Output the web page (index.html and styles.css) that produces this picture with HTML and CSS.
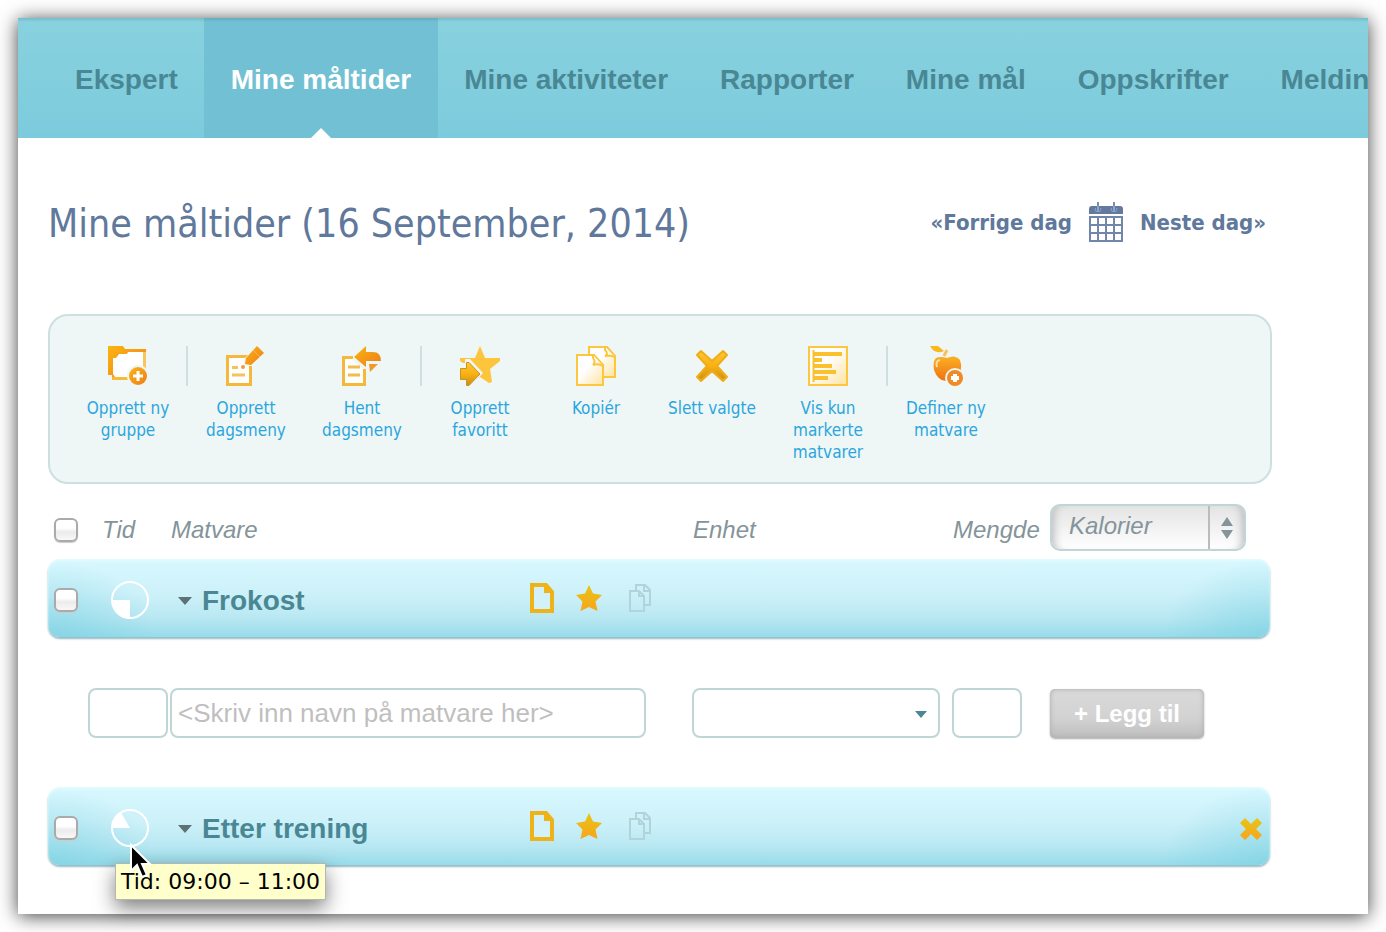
FILE: index.html
```html
<!DOCTYPE html>
<html lang="no">
<head>
<meta charset="utf-8">
<title>Mine måltider</title>
<link rel="stylesheet" href="styles.css">
</head>
<body>
<svg class="defs" width="0" height="0" aria-hidden="true">
  <defs>
    <linearGradient id="amber" x1="0" y1="0" x2="1" y2="1"><stop offset="0" stop-color="#fbb512"/><stop offset="1" stop-color="#ee7d1a"/></linearGradient>
    <linearGradient id="yellow" x1="0" y1="0" x2="0" y2="1"><stop offset="0" stop-color="#e8c414"/><stop offset="1" stop-color="#f7a51d"/></linearGradient>
    <linearGradient id="gold" x1="0" y1="0" x2="0" y2="1"><stop offset="0" stop-color="#ffc933"/><stop offset=".5" stop-color="#f9b012"/><stop offset="1" stop-color="#c98f18"/></linearGradient>
    <linearGradient id="paper" x1="0" y1="0" x2="1" y2="1"><stop offset=".4" stop-color="#fff"/><stop offset="1" stop-color="#ffe3a0"/></linearGradient>
    <linearGradient id="fruit" x1="0" y1="0" x2="0" y2="1"><stop offset="0" stop-color="#fcb022"/><stop offset="1" stop-color="#ec6f14"/></linearGradient>
    <symbol id="note" viewBox="0 0 24 30"><path d="M2 2H16L22 9V28H2Z" fill="#d3f1f8" stroke="#efb31a" stroke-width="4"/><path d="M14 2H17L23 8V10H14Z" fill="#efb31a"/></symbol>
    <symbol id="star" viewBox="0 0 26 26"><path d="M13 0L17 8.500L26 10L19.500 16.500L21.500 26L13 22L4.500 26L6.500 16.500L0 10L9 8.500Z" fill="url(#yellow)"/></symbol>
    <symbol id="copy" viewBox="0 0 22 28"><path d="M7 6V1H16L21 6V21H16M15 1V7H21M1 7H10L15 12V27H1ZM10 7V12H15" fill="none" stroke="#b3d3da" stroke-width="2"/></symbol>
    <symbol id="cross" viewBox="0 0 22 22"><path d="M5 0L11 6L17 0L22 5L16 11L22 17L17 22L11 16L5 22L0 17L6 11L0 5Z" fill="url(#yellow)"/></symbol>
  </defs>
</svg>

<div class="window">
  <nav class="tabs">
    <a href="#">Ekspert</a>
    <a href="#" class="active" aria-current="page">Mine måltider</a>
    <a href="#">Mine aktiviteter</a>
    <a href="#">Rapporter</a>
    <a href="#">Mine mål</a>
    <a href="#">Oppskrifter</a>
    <a href="#">Meldinger</a>
  </nav>

  <main class="content">
    <header class="heading">
      <h1>Mine måltider (16 September, 2014)</h1>
      <div class="days">
        <a href="#">«Forrige dag</a>
        <button type="button" class="calendar" aria-label="Kalender">
          <svg width="34" height="40" viewBox="0 0 34 40"><path d="M3 4H31Q34 4 34 7V12H0V7Q0 4 3 4Z" fill="#64799c"/><path d="M9 0V4M25 0V4" stroke="#7c8fae" stroke-width="2"/><path d="M9 4V10M25 4V10" stroke="#84a6d8" stroke-width="2"/><path d="M6.500 6Q5 9 8 10M11.500 6Q13 9 10 10M22.500 6Q21 9 24 10M27.500 6Q29 9 26 10" fill="none" stroke="#86a5d2"/><path d="M1 15H33V39H1ZM9 15V39M17 15V39M25 15V39M1 23H33M1 31H33" fill="none" stroke="#7186a8" stroke-width="2"/></svg>
        </button>
        <a href="#">Neste dag»</a>
      </div>
    </header>

    <div class="toolbar">
      <button type="button" class="tool">
        <svg viewBox="0 0 40 40"><path d="M0 0H15L17 3H38V34H4V29H0Z" fill="url(#amber)"/><path d="M5 12H8L11 8H19L20 6H35V31H7L5 28Z" fill="#fff"/><path d="M5 28V31H20V34H4Z" fill="#f8bb35"/><path d="M35 6H38V34H35Z" fill="#f8c558"/><circle cx="30" cy="30" r="11" fill="#eef6f6"/><circle cx="30" cy="30" r="9" fill="url(#amber)"/><path d="M30 25V35M25 30H35" stroke="#fff" stroke-width="3"/></svg>
        <span>Opprett ny gruppe</span>
      </button>
      <i class="rule"></i>
      <button type="button" class="tool">
        <svg viewBox="0 0 40 40"><path d="M1.500 10.500H24.500V38.500H1.500Z" fill="#fff" stroke="#f4b93a" stroke-width="3"/><path d="M18 20V13L24 7H28V20Z" fill="#eef6f6"/><path d="M6 21.500H12M6 29H19" stroke="#f6c35b" stroke-width="3"/><circle cx="17" cy="21" r="2" fill="#f39a3a"/><path d="M31 0L38 7L25 19L19 18L20 12Z" fill="url(#amber)"/><path d="M27 4L34 11" stroke="#f9b64f"/></svg>
        <span>Opprett dagsmeny</span>
      </button>
      <button type="button" class="tool">
        <svg viewBox="0 0 40 40"><path d="M1.500 11.500H22.500V38.500H1.500Z" fill="#fff" stroke="#f4b93a" stroke-width="3"/><path d="M11 8H25V23H20L11 14Z" fill="#eef6f6"/><path d="M6 21H18M6 29H18" stroke="#f4bd4b" stroke-width="3"/><path d="M12 11L24 0V6H31Q39 6 39 15H24V21Z" fill="url(#amber)"/><path d="M27 18H36L28 26Z" fill="#f2992a"/></svg>
        <span>Hent dagsmeny</span>
      </button>
      <i class="rule"></i>
      <button type="button" class="tool">
        <svg viewBox="0 0 40 40"><path d="M20 0L25 12H40V15L30 23L32 36L29 37L20 31L10 37L12 23L0 15V12H15Z" fill="#fdc53c"/><path d="M0 17H5V13H10L23 27L11 40H0Z" fill="#eef6f6"/><path d="M.500 22.500H6.500V16.500H9L20 28L9 39.500H6.500V33.500H.500Z" fill="url(#gold)" stroke="#c99424"/></svg>
        <span>Opprett favoritt</span>
      </button>
      <button type="button" class="tool">
        <svg viewBox="0 0 40 40" fill="url(#paper)" stroke="#fcc63f" stroke-width="2"><path d="M13 1H31L39 10V31H13Z"/><path d="M29 1V4Q33 8 29 10Q34 9 39 11"/><path d="M1 9H18L27 19V39H1Z"/><path d="M17 9V12Q20 16 17 19Q22 17 27 20"/></svg>
        <span>Kopiér</span>
      </button>
      <button type="button" class="tool">
        <svg viewBox="0 0 40 40"><path d="M9 5L20 15L31 5L35 9L25 20L35 31L31 35L20 25L9 35L5 31L15 20L5 9Z" fill="url(#gold)" stroke="#f0ad19" stroke-width="2" stroke-linejoin="round"/></svg>
        <span>Slett valgte</span>
      </button>
      <button type="button" class="tool">
        <svg viewBox="0 0 40 40"><path d="M1 1H39V39H1Z" fill="url(#paper)" stroke="#fcc63f" stroke-width="2"/><path d="M5.500 4V36" stroke="#fbc02e" stroke-width="2"/><path d="M5 8H34M5 14H14M5 20H24M5 26H28M5 32H20" stroke="#fbc02e" stroke-width="4"/></svg>
        <span>Vis kun markerte matvarer</span>
      </button>
      <i class="rule"></i>
      <button type="button" class="tool">
        <svg viewBox="0 0 40 40"><path d="M4 0H12L18 5Q9 9 4 0Z" fill="#f9b81e"/><path d="M21 4L18 10" stroke="#f8c25a" stroke-width="3"/><path d="M21 12Q29 8 34 14Q38 24 29 33Q24 38 20 35Q12 35 8 24Q6 11 14 11Q18 11 21 12Z" fill="url(#fruit)"/><path d="M14 14Q9 15 11 21" fill="none" stroke="#ffe0a0" stroke-width="2"/><circle cx="29" cy="32" r="10" fill="#eef6f6"/><circle cx="29" cy="32" r="8" fill="#f08a24"/><path d="M29 28V36M25 32H33" stroke="#fff" stroke-width="4"/></svg>
        <span>Definer ny matvare</span>
      </button>
    </div>

    <div class="columns cells">
      <input type="checkbox" class="check" aria-label="Velg alle">
      <span class="time-label">Tid</span>
      <span>Matvare</span>
      <span>Enhet</span>
      <span>Mengde</span>
      <div class="measure">
        <select aria-label="Næringsverdi"><option>Kalorier</option></select>
        <svg width="12" height="22" viewBox="0 0 12 22"><path d="M6 0L12 9H0ZM0 13H12L6 22Z" fill="#84949a"/></svg>
      </div>
    </div>

    <section class="group">
      <input type="checkbox" class="check" aria-label="Velg Frokost">
      <div class="clock"><svg width="38" height="38" viewBox="0 0 38 38"><circle cx="19" cy="19" r="18" fill="none" stroke="#fff" stroke-width="2"/><path d="M19 19V37A18 18 0 0 1 1 19Z" fill="#fff"/></svg></div>
      <button type="button" class="name"><svg width="14" height="9" viewBox="0 0 14 9"><path d="M0 0H14L7 8Z" fill="#5d7277"/></svg>Frokost</button>
      <div class="actions">
        <button type="button" aria-label="Notat"><svg width="24" height="30"><use href="#note"/></svg></button>
        <button type="button" aria-label="Favoritt"><svg width="26" height="26"><use href="#star"/></svg></button>
        <button type="button" aria-label="Kopiér"><svg width="22" height="28"><use href="#copy"/></svg></button>
      </div>
    </section>

    <form class="entry cells">
      <input type="text" class="field time" aria-label="Tid">
      <input type="text" class="field food" aria-label="Matvare" placeholder="&lt;Skriv inn navn på matvare her&gt;">
      <div class="unit">
        <select class="field" aria-label="Enhet"><option></option></select>
        <svg width="12" height="7" viewBox="0 0 12 7"><path d="M0 0H12L6 7Z" fill="#4a8794"/></svg>
      </div>
      <input type="text" class="field amount" aria-label="Mengde">
      <button type="button" class="add">+ Legg til</button>
    </form>

    <section class="group">
      <input type="checkbox" class="check" aria-label="Velg Etter trening">
      <div class="clock">
        <svg width="38" height="38" viewBox="0 0 38 38"><circle cx="19" cy="19" r="18" fill="none" stroke="#fff" stroke-width="2"/><path d="M19 19H1A18 18 0 0 1 10 3.400Z" fill="#fff"/></svg>
        <div class="tooltip" role="tooltip">Tid: 09:00 – 11:00</div>
        <svg class="pointer" width="24" height="36" viewBox="0 0 24 36"><path d="M2 2V28L8 22L13 34L18 32L13 21H21Z" fill="#000" stroke="#fff" stroke-width="2"/></svg>
      </div>
      <button type="button" class="name"><svg width="14" height="9" viewBox="0 0 14 9"><path d="M0 0H14L7 8Z" fill="#5d7277"/></svg>Etter trening</button>
      <div class="actions">
        <button type="button" aria-label="Notat"><svg width="24" height="30"><use href="#note"/></svg></button>
        <button type="button" aria-label="Favoritt"><svg width="26" height="26"><use href="#star"/></svg></button>
        <button type="button" aria-label="Kopiér"><svg width="22" height="28"><use href="#copy"/></svg></button>
      </div>
      <button type="button" class="remove" aria-label="Slett gruppe"><svg width="22" height="22"><use href="#cross"/></svg></button>
    </section>
  </main>
</div>
</body>
</html>
```
FILE: styles.css
```css
* { box-sizing: border-box; }
body {
  margin: 0;
  padding: 18px;
  background: #fff;
  font-family: "Liberation Sans", Arial, sans-serif;
}
a { text-decoration: none; color: inherit; }
button { border: 0; padding: 0; background: none; font: inherit; color: inherit; cursor: pointer; }
svg { display: block; flex: none; }
.defs { position: absolute; }

.window {
  min-height: calc(100vh - 36px);
  background: #fff;
  box-shadow: 0 2px 18px rgba(0, 0, 0, .75);
}

/* Tabs */
.tabs {
  display: flex;
  height: 120px;
  padding-left: 31px;
  overflow: hidden;
  background: linear-gradient(#72bccb, #88d1df 4px, #7ccbdc);
  color: #4a8794;
  font-size: 28px;
  font-weight: bold;
}
.tabs a {
  position: relative;
  display: flex;
  align-items: center;
  padding: 4px 26px 0;
  white-space: nowrap;
}
.tabs .active {
  padding: 4px 27px 0;
  color: #fff;
  background: linear-gradient(#63adbf, #72c0d3 4px);
}
.tabs .active::after {
  content: "";
  position: absolute;
  bottom: 0;
  left: 50%;
  margin-left: -10px;
  border: 10px solid transparent;
  border-top: 0;
  border-bottom-color: #fff;
}

/* Page heading */
.content { padding: 62px 96px 48px 30px; }
.heading {
  display: flex;
  justify-content: space-between;
  align-items: flex-start;
  margin-bottom: 66px;
  padding-right: 6px;
  color: #60789b;
  font-family: "DejaVu Sans Condensed", "DejaVu Sans", sans-serif;
  font-stretch: condensed;
}
h1 { margin: 0; font-size: 39px; font-weight: normal; line-height: 48px; }
.days { display: flex; align-items: center; gap: 17px; height: 44px; font-size: 22px; font-weight: bold; }

/* Toolbar */
.toolbar {
  display: flex;
  padding: 30px 20px 19px;
  border: 2px solid #cddfdf;
  border-radius: 20px;
  background: #eef6f6;
}
.rule { width: 2px; height: 40px; background: #cddfdf; }
.tool {
  display: flex;
  flex-direction: column;
  align-items: center;
  gap: 11px;
  width: 116px;
  padding: 0 10px;
  color: #2ba6dd;
  font-family: "DejaVu Sans Condensed", "DejaVu Sans", sans-serif;
  font-stretch: condensed;
  font-size: 17px;
  line-height: 22px;
}
.tool svg { width: 40px; height: 40px; }

/* Column labels and entry row share one set of tracks */
.cells {
  display: grid;
  grid-template-columns: 40px 82px minmax(0, 1fr) 260px 98px 222px;
  align-items: center;
}
.columns { padding: 20px 0 8px; color: #84949a; font-size: 24px; font-style: italic; }
.columns span { padding: 4px 0 0 1px; }
.columns .time-label { padding-left: 14px; }
.check {
  appearance: none;
  width: 24px;
  height: 24px;
  margin: 4px 0 0 6px;
  border: 2px solid #aaa;
  border-radius: 6px;
  background: linear-gradient(#fff 40%, #ebebeb 60%, #f8f8f8);
  box-shadow: 0 1px 1px #ccc;
}
.measure { position: relative; width: 196px; }
.measure select {
  appearance: none;
  display: block;
  width: 100%;
  height: 47px;
  padding: 0 40px 5px 17px;
  border: 2px solid #bfd5d6;
  border-radius: 10px;
  background: linear-gradient(#bbb, #bbb) right 34px top / 2px 100% no-repeat, linear-gradient(#e4e4e4, #fff);
  box-shadow: inset 9px 0 8px -7px #bbb, inset -9px 0 8px -7px #bbb;
  color: #84949a;
  font: inherit;
}
.measure svg { position: absolute; top: 13px; right: 13px; pointer-events: none; }

/* Meal groups */
.group {
  display: grid;
  grid-template-columns: 62px 68px 352px 1fr auto;
  align-items: center;
  height: 78px;
  margin-right: 2px;
  padding-right: 8px;
  border-radius: 12px;
  background:
    radial-gradient(ellipse at bottom left, rgba(120, 208, 226, .6), transparent 70%) left bottom / 110px 100% no-repeat,
    radial-gradient(ellipse at bottom right, rgba(120, 208, 226, .6), transparent 70%) right bottom / 110px 100% no-repeat,
    linear-gradient(#d8f8ff, #cdf1f9 45%, #b9e8f2 75%, #98dcea);
  box-shadow: inset 0 2px 2px #e2fbff, 0 2px 2px #94bcc4;
}
.name {
  display: flex;
  align-items: center;
  gap: 10px;
  padding-top: 6px;
  color: #4a8794;
  font-size: 28px;
  font-weight: bold;
}
.clock { position: relative; padding: 4px 0 0 1px; }
.actions { display: flex; align-items: center; gap: 22px; }
.actions button:last-child { margin-left: 5px; }
.remove { margin-top: 6px; }
.tooltip {
  position: absolute;
  top: 58px;
  left: 5px;
  padding: 0 5px;
  border: 1px solid #b5b5b5;
  background: #ffffcb;
  box-shadow: 0 8px 20px rgba(0, 0, 0, .5);
  color: #000;
  font: 22px/35px "DejaVu Sans", sans-serif;
  white-space: nowrap;
}
.pointer { position: absolute; top: 38px; left: 19px; }

/* Entry row */
.entry { padding: 51px 0 49px; }
.field {
  display: block;
  width: 100%;
  height: 50px;
  padding: 0 6px;
  border: 2px solid #bfd5d6;
  border-radius: 8px;
  background: #fff;
  font: 26px "Liberation Sans", Arial, sans-serif;
}
.field::placeholder { color: #bfbfbf; opacity: 1; }
.time { grid-column: 2; width: 80px; }
.food { width: calc(100% - 46px); }
.unit { position: relative; width: 248px; }
.unit select { appearance: none; }
.unit svg { position: absolute; top: 23px; right: 13px; pointer-events: none; }
.amount { width: 70px; }
.add {
  width: 154px;
  height: 49px;
  padding-top: 2px;
  border-radius: 5px;
  background: linear-gradient(#dadada, #d2d2d2 60%, #bebebe);
  box-shadow: inset 0 0 5px #aaa, 0 1px 2px #aaa;
  color: #fff;
  font-size: 24px;
  font-weight: bold;
}
```
